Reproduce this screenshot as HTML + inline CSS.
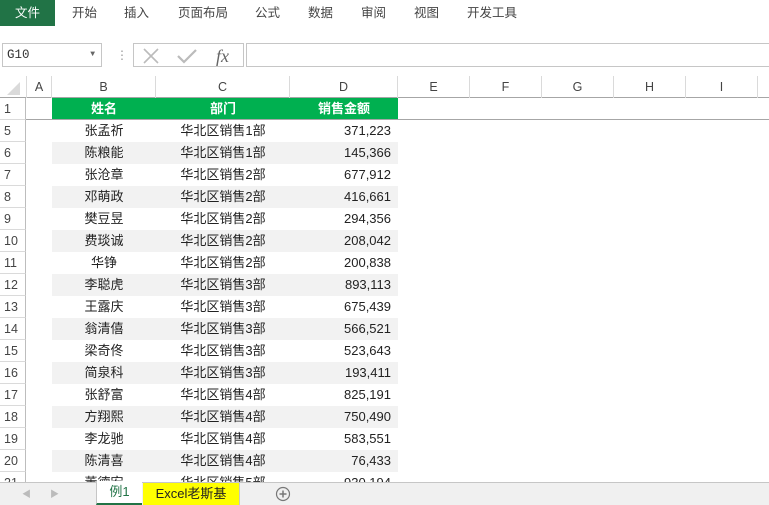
<!DOCTYPE html>
<html><head><meta charset="utf-8"><style>
*{margin:0;padding:0;box-sizing:border-box}
body{width:769px;height:505px;overflow:hidden;background:#fff;font-family:"Liberation Sans","Noto Sans CJK SC",sans-serif;font-size:13px;color:#222;position:relative}
.a{position:absolute}
.tab{position:absolute;top:0;height:26px;line-height:26px;font-size:12.5px;color:#444}
.ch{position:absolute;top:76px;height:22px;line-height:22px;text-align:center;color:#444;font-size:12.5px;border-right:1px solid #dadada}
.rh{position:absolute;left:0;width:26px;height:22px;line-height:22px;padding-left:4px;color:#444;font-size:12.5px;border-bottom:1px solid #dadada;border-right:1px solid #bdbdbd;background:#fff}
.row{position:absolute;left:52px;width:346px;height:22px;line-height:22px}
.row span{position:absolute;top:0}
.g{background:#f2f2f2}
</style></head><body>
<div class="a" style="left:0;top:0;width:55px;height:26px;background:#217346;color:#fff;line-height:26px;text-align:center;font-size:12.5px">文件</div>
<div class="tab" style="left:72px">开始</div>
<div class="tab" style="left:124px">插入</div>
<div class="tab" style="left:178px">页面布局</div>
<div class="tab" style="left:255px">公式</div>
<div class="tab" style="left:308px">数据</div>
<div class="tab" style="left:361px">审阅</div>
<div class="tab" style="left:414px">视图</div>
<div class="tab" style="left:467px">开发工具</div>
<div class="a" style="left:0;top:26px;width:769px;height:50px;background:#fff"></div>
<div class="a" style="left:2px;top:43px;width:100px;height:24px;border:1px solid #c6c6c6;line-height:22px;padding-left:4px;font-family:'Liberation Mono',monospace;font-size:12.5px;color:#333">G10<span style="position:absolute;right:6px;top:0;font-size:8px;color:#666">▼</span></div>
<div class="a" style="left:116px;top:46px;color:#999;font-size:12px;line-height:18px">⋮</div>
<div class="a" style="left:133px;top:43px;width:111px;height:24px;border:1px solid #c6c6c6"></div>
<svg class="a" style="left:140px;top:46px" width="100" height="20"><path d="M4 3 L18 17 M18 3 L4 17" stroke="#bbb" stroke-width="1.6"/><path d="M38 10 L44 16 L56 4" stroke="#bbb" stroke-width="2.2" fill="none"/><text x="76" y="16" font-family="Liberation Serif,serif" font-style="italic" font-size="18" fill="#666">fx</text></svg>
<div class="a" style="left:246px;top:43px;width:523px;height:24px;border:1px solid #c6c6c6;border-right:none"></div>
<!-- column headers -->
<div class="a" style="left:0;top:76px;width:769px;height:22px;border-bottom:1px solid #a6a6a6"></div>
<svg class="a" style="left:6px;top:82px" width="16" height="14"><path d="M14 0 L14 13 L1 13Z" fill="#dadada"/></svg>
<div class="ch" style="left:0;width:27px;border-right:1px solid #dadada"></div>
<div class="ch" style="left:27px;width:25px">A</div>
<div class="ch" style="left:52px;width:104px">B</div>
<div class="ch" style="left:156px;width:134px">C</div>
<div class="ch" style="left:290px;width:108px">D</div>
<div class="ch" style="left:398px;width:72px">E</div>
<div class="ch" style="left:470px;width:72px">F</div>
<div class="ch" style="left:542px;width:72px">G</div>
<div class="ch" style="left:614px;width:72px">H</div>
<div class="ch" style="left:686px;width:72px">I</div>
<!-- row 1 -->
<div class="a" style="left:0;top:98px;width:769px;height:22px;border-bottom:1px solid #a6a6a6"></div>
<div class="rh" style="top:98px">1</div>
<div class="row" style="top:98px;height:21px;background:#00b050;color:#fff;font-weight:bold"><span style="left:0;width:104px;text-align:center">姓名</span><span style="left:104px;width:134px;text-align:center">部门</span><span style="left:238px;width:108px;text-align:center">销售金额</span></div>
<div id="rows"></div>
<script></script>
<div class="rh" style="top:120px">5</div><div class="row" style="top:120px"><span style="left:0;width:104px;text-align:center">张孟祈</span><span style="left:104px;width:134px;text-align:center">华北区销售1部</span><span style="left:238px;width:101px;text-align:right">371,223</span></div>
<div class="rh" style="top:142px">6</div><div class="row g" style="top:142px"><span style="left:0;width:104px;text-align:center">陈粮能</span><span style="left:104px;width:134px;text-align:center">华北区销售1部</span><span style="left:238px;width:101px;text-align:right">145,366</span></div>
<div class="rh" style="top:164px">7</div><div class="row" style="top:164px"><span style="left:0;width:104px;text-align:center">张沧章</span><span style="left:104px;width:134px;text-align:center">华北区销售2部</span><span style="left:238px;width:101px;text-align:right">677,912</span></div>
<div class="rh" style="top:186px">8</div><div class="row g" style="top:186px"><span style="left:0;width:104px;text-align:center">邓萌政</span><span style="left:104px;width:134px;text-align:center">华北区销售2部</span><span style="left:238px;width:101px;text-align:right">416,661</span></div>
<div class="rh" style="top:208px">9</div><div class="row" style="top:208px"><span style="left:0;width:104px;text-align:center">樊豆昱</span><span style="left:104px;width:134px;text-align:center">华北区销售2部</span><span style="left:238px;width:101px;text-align:right">294,356</span></div>
<div class="rh" style="top:230px">10</div><div class="row g" style="top:230px"><span style="left:0;width:104px;text-align:center">费琰诚</span><span style="left:104px;width:134px;text-align:center">华北区销售2部</span><span style="left:238px;width:101px;text-align:right">208,042</span></div>
<div class="rh" style="top:252px">11</div><div class="row" style="top:252px"><span style="left:0;width:104px;text-align:center">华铮</span><span style="left:104px;width:134px;text-align:center">华北区销售2部</span><span style="left:238px;width:101px;text-align:right">200,838</span></div>
<div class="rh" style="top:274px">12</div><div class="row g" style="top:274px"><span style="left:0;width:104px;text-align:center">李聪虎</span><span style="left:104px;width:134px;text-align:center">华北区销售3部</span><span style="left:238px;width:101px;text-align:right">893,113</span></div>
<div class="rh" style="top:296px">13</div><div class="row" style="top:296px"><span style="left:0;width:104px;text-align:center">王露庆</span><span style="left:104px;width:134px;text-align:center">华北区销售3部</span><span style="left:238px;width:101px;text-align:right">675,439</span></div>
<div class="rh" style="top:318px">14</div><div class="row g" style="top:318px"><span style="left:0;width:104px;text-align:center">翁清僖</span><span style="left:104px;width:134px;text-align:center">华北区销售3部</span><span style="left:238px;width:101px;text-align:right">566,521</span></div>
<div class="rh" style="top:340px">15</div><div class="row" style="top:340px"><span style="left:0;width:104px;text-align:center">梁奇佟</span><span style="left:104px;width:134px;text-align:center">华北区销售3部</span><span style="left:238px;width:101px;text-align:right">523,643</span></div>
<div class="rh" style="top:362px">16</div><div class="row g" style="top:362px"><span style="left:0;width:104px;text-align:center">简泉科</span><span style="left:104px;width:134px;text-align:center">华北区销售3部</span><span style="left:238px;width:101px;text-align:right">193,411</span></div>
<div class="rh" style="top:384px">17</div><div class="row" style="top:384px"><span style="left:0;width:104px;text-align:center">张舒富</span><span style="left:104px;width:134px;text-align:center">华北区销售4部</span><span style="left:238px;width:101px;text-align:right">825,191</span></div>
<div class="rh" style="top:406px">18</div><div class="row g" style="top:406px"><span style="left:0;width:104px;text-align:center">方翔熙</span><span style="left:104px;width:134px;text-align:center">华北区销售4部</span><span style="left:238px;width:101px;text-align:right">750,490</span></div>
<div class="rh" style="top:428px">19</div><div class="row" style="top:428px"><span style="left:0;width:104px;text-align:center">李龙驰</span><span style="left:104px;width:134px;text-align:center">华北区销售4部</span><span style="left:238px;width:101px;text-align:right">583,551</span></div>
<div class="rh" style="top:450px">20</div><div class="row g" style="top:450px"><span style="left:0;width:104px;text-align:center">陈清喜</span><span style="left:104px;width:134px;text-align:center">华北区销售4部</span><span style="left:238px;width:101px;text-align:right">76,433</span></div>
<div class="rh" style="top:472px">21</div><div class="row" style="top:472px"><span style="left:0;width:104px;text-align:center">董德宏</span><span style="left:104px;width:134px;text-align:center">华北区销售5部</span><span style="left:238px;width:101px;text-align:right">930,194</span></div>
<!-- sheet tabs -->
<div class="a" style="left:0;top:482px;width:769px;height:23px;background:#f0f0f0;border-top:1px solid #c6c6c6"></div>
<div class="a" style="left:22px;top:487px;font-size:9px;color:#bbb">◀</div>
<div class="a" style="left:50px;top:487px;font-size:9px;color:#bbb">▶</div>
<div class="a" style="left:96px;top:481px;width:46px;height:24px;background:#fff;border-left:1px solid #c6c6c6;border-bottom:2px solid #217346;text-align:center;line-height:22px;color:#217346;font-size:13px">例1</div>
<div class="a" style="left:143px;top:483px;width:97px;height:22px;background:#ffff00;text-align:center;line-height:21px;color:#222;font-size:13px;border-right:1px solid #c6c6c6">Excel老斯基</div>
<svg class="a" style="left:275px;top:486px" width="16" height="16"><circle cx="8" cy="8" r="6.5" fill="none" stroke="#777" stroke-width="1.2"/><path d="M8 4.5V11.5M4.5 8H11.5" stroke="#777" stroke-width="1.5"/></svg>
</body></html>
